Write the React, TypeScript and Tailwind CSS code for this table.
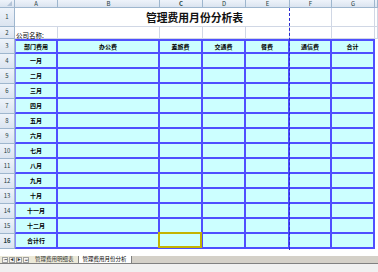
import React from 'react';

const colLetters = ['A', 'B', 'C', 'D', 'E', 'F', 'G'];
const heads = ['部门费用', '办公费', '差旅费', '交通费', '餐费', '通信费', '合计'];
const months = ['一月', '二月', '三月', '四月', '五月', '六月', '七月', '八月', '九月', '十月', '十一月', '十二月', '合计行'];

const font = { fontFamily: '"Noto Sans CJK SC", "Liberation Sans", sans-serif' };

const hdr = 'bg-gradient-to-b from-[#eef3fa] to-[#dbe4f0] border-r border-b border-[#9eb6ce] text-[6px] text-[#27413e] flex items-center justify-center leading-none';
const grid = 'border-r border-b border-[#d0d7e5] bg-white';
const blue = 'bg-[#ccffff] border-r-2 border-b-2 border-[#4f4fff]';

const App: React.FC = () => {
  return (
    <div className="w-[378px] h-[272px] overflow-hidden bg-white relative" style={font}>
      <div className="grid grid-cols-[15px_43px_102px_43px_43px_44px_42px_43px_3px] grid-rows-[8px_19px_12px_repeat(14,15px)]">
        {/* column header row */}
        <div className={hdr + ' relative'}>
          <div className="absolute right-[2px] bottom-[1px] w-0 h-0 border-l-[5px] border-l-transparent border-b-[5px] border-b-[#b4c4d8]" />
        </div>
        {colLetters.map((c) => (
          <div key={c} className={hdr + (c === 'C' ? ' font-bold' : '')}>{c}</div>
        ))}
        <div className={hdr} />

        {/* row 1 */}
        <div className={hdr}>1</div>
        <div className={grid + ' col-span-6 flex items-center justify-center pl-[43px]'}>
          <span className="text-[10.8px] font-bold text-[#111]">管理费用月份分析表</span>
        </div>
        <div className={grid} />
        <div className={grid} />

        {/* row 2 */}
        <div className={hdr}>2</div>
        <div className={grid + ' relative overflow-visible'}>
          <span className="absolute left-[1px] bottom-[0px] text-[6.5px] leading-none whitespace-nowrap text-black">公司名称:</span>
        </div>
        {[1, 2, 3, 4, 5, 6].map((i) => (
          <div key={i} className={grid} />
        ))}
        <div className={grid} />

        {/* row 3 header */}
        <div className={hdr}>3</div>
        {heads.map((h, i) => (
          <div
            key={h}
            className={blue + ' border-t-2 flex items-center justify-center text-[6px] font-bold text-black leading-none' + (i === 0 ? ' border-l border-l-[#8a8aff]' : '')}
          >
            {h}
          </div>
        ))}
        <div className="bg-white" />

        {/* rows 4-16 */}
        {months.map((m, r) => (
          <React.Fragment key={m}>
            <div className={hdr + (r === 12 ? ' font-bold' : '')}>{r + 4}</div>
            <div className={blue + ' border-l border-l-[#8a8aff] flex items-center justify-center text-[6px] font-bold text-black leading-none'}>
              {m}
            </div>
            {[1, 2, 3, 4, 5, 6].map((i) => (
              <div key={i} className={blue + ' relative'}>
                {r === 12 && i === 2 && (
                  <div className="absolute -left-[2px] -top-[2px] -right-[1px] -bottom-[1px] border-2 border-[#c4b400]" />
                )}
              </div>
            ))}
            <div className="bg-white" />
          </React.Fragment>
        ))}
      </div>

      {/* page break line */}
      <div className="absolute left-[289px] top-[8px] h-[242px] border-l border-dashed border-[#2a2ad0]" />

      <div className="h-[7px] bg-white" />

      {/* sheet tabs */}
      <div className="h-[8px] flex items-stretch bg-[#d4d0c8] border-b border-[#808080] text-[5.5px] leading-none">
        <div className="flex items-center gap-[1px] px-[2px] bg-[#ece9d8]">
          {['⏮', '◀', '▶', '⏭'].map((s) => (
            <div key={s} className="w-[6px] h-[6px] border border-[#a0a0a0] bg-[#f4f4f4] flex items-center justify-center text-[3.5px] text-[#333]">
              {s}
            </div>
          ))}
        </div>
        <div className="flex items-center px-[4px] bg-[#ece9d8] border-r border-[#808080] text-[#333] whitespace-nowrap">管理费用明细表</div>
        <div className="flex items-center px-[4px] bg-white border-r border-[#808080] text-black whitespace-nowrap">管理费用月份分析</div>
        <div className="flex-1 bg-[#d4d0c8]" />
      </div>

      <div className="h-[8px] bg-[#f0f0f0]" />
    </div>
  );
};

export default App;
